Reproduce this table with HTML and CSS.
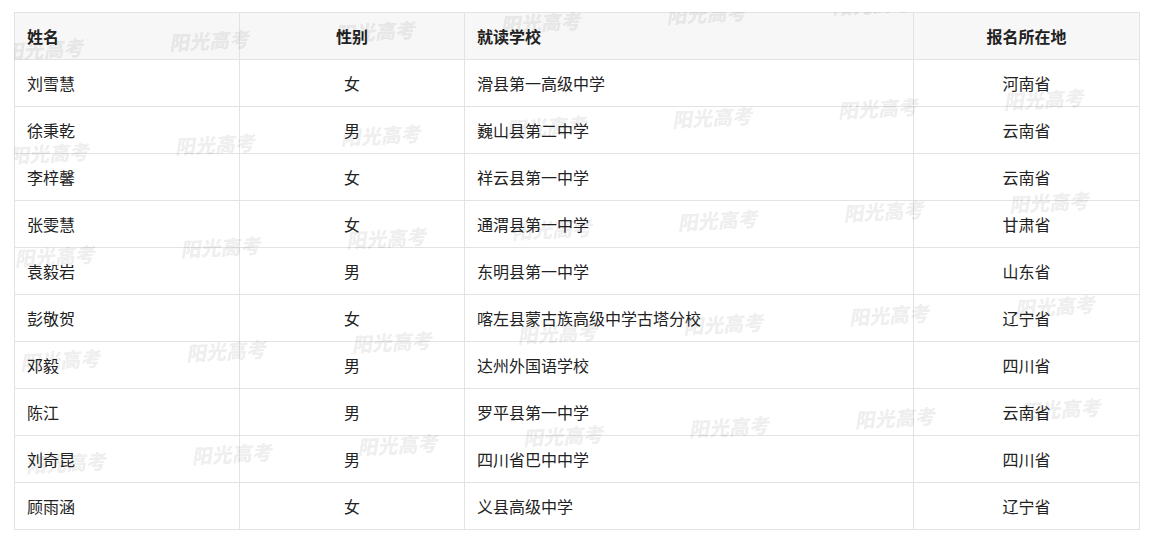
FILE: index.html
```html
<!DOCTYPE html>
<html lang="zh-CN">
<head>
<meta charset="utf-8">
<title>名单</title>
<link rel="stylesheet" href="styles.css">
</head>
<body>
<div class="wrap">
  <table class="list">
    <colgroup>
      <col class="c-name">
      <col class="c-sex">
      <col class="c-school">
      <col class="c-place">
    </colgroup>
    <thead>
      <tr><th class="left">姓名</th><th class="center">性别</th><th class="left">就读学校</th><th class="center">报名所在地</th></tr>
    </thead>
    <tbody>
      <tr><td class="left">刘雪慧</td><td class="center">女</td><td class="left">滑县第一高级中学</td><td class="center">河南省</td></tr>
      <tr><td class="left">徐秉乾</td><td class="center">男</td><td class="left">巍山县第二中学</td><td class="center">云南省</td></tr>
      <tr><td class="left">李梓馨</td><td class="center">女</td><td class="left">祥云县第一中学</td><td class="center">云南省</td></tr>
      <tr><td class="left">张雯慧</td><td class="center">女</td><td class="left">通渭县第一中学</td><td class="center">甘肃省</td></tr>
      <tr><td class="left">袁毅岩</td><td class="center">男</td><td class="left">东明县第一中学</td><td class="center">山东省</td></tr>
      <tr><td class="left">彭敬贺</td><td class="center">女</td><td class="left">喀左县蒙古族高级中学古塔分校</td><td class="center">辽宁省</td></tr>
      <tr><td class="left">邓毅</td><td class="center">男</td><td class="left">达州外国语学校</td><td class="center">四川省</td></tr>
      <tr><td class="left">陈江</td><td class="center">男</td><td class="left">罗平县第一中学</td><td class="center">云南省</td></tr>
      <tr><td class="left">刘奇昆</td><td class="center">男</td><td class="left">四川省巴中中学</td><td class="center">四川省</td></tr>
      <tr><td class="left">顾雨涵</td><td class="center">女</td><td class="left">义县高级中学</td><td class="center">辽宁省</td></tr>
    </tbody>
  </table>
  <div class="marks" aria-hidden="true">
    <span>阳光高考</span><span>阳光高考</span><span>阳光高考</span><span>阳光高考</span><span>阳光高考</span><span>阳光高考</span><span>阳光高考</span>
    <span>阳光高考</span><span>阳光高考</span><span>阳光高考</span><span>阳光高考</span><span>阳光高考</span><span>阳光高考</span><span>阳光高考</span>
    <span>阳光高考</span><span>阳光高考</span><span>阳光高考</span><span>阳光高考</span><span>阳光高考</span><span>阳光高考</span><span>阳光高考</span>
    <span>阳光高考</span><span>阳光高考</span><span>阳光高考</span><span>阳光高考</span><span>阳光高考</span><span>阳光高考</span><span>阳光高考</span>
    <span>阳光高考</span><span>阳光高考</span><span>阳光高考</span><span>阳光高考</span><span>阳光高考</span><span>阳光高考</span><span>阳光高考</span>
  </div>
</div>
</body>
</html>
```

FILE: styles.css
```css
html, body {
  margin: 0;
  padding: 0;
  background: #ffffff;
}
body {
  padding: 12px 0 0 14px;
  font-family: "Noto Sans CJK SC", "Noto Sans", sans-serif;
  color: #333333;
}
.wrap {
  position: relative;
  width: 1126px;
  height: 518px;
  overflow: hidden;
}
.list {
  width: 1125px;
  border-collapse: collapse;
  table-layout: fixed;
  font-size: 16px;
}
.c-name { width: 225px; }
.c-sex { width: 225px; }
.c-school { width: 449px; }
.c-place { width: 226px; }
.list th,
.list td {
  border: 1px solid #e3e3e3;
  height: 47px;
  padding: 0 12px;
  vertical-align: middle;
  line-height: 20px;
  box-sizing: border-box;
}
.list thead th {
  background: #f7f7f7;
  font-weight: 700;
  color: #222222;
}
.list td {
  font-weight: 400;
  color: #222222;
}
.left { text-align: left; }
.center { text-align: center; }
.marks {
  position: absolute;
  left: -18px;
  top: 28px;
  display: grid;
  grid-template-columns: repeat(7, 166px);
  grid-auto-rows: 103.5px;
  transform: rotate(-3.1deg);
  transform-origin: 0 0;
  pointer-events: none;
}
.marks span {
  display: block;
  width: 82px;
  font-size: 20px;
  line-height: 24px;
  font-weight: 900;
  font-family: "Noto Sans CJK SC", sans-serif;
  color: rgba(0, 0, 0, 0.085);
  transform: skewX(-12deg);
  white-space: nowrap;
}
```
